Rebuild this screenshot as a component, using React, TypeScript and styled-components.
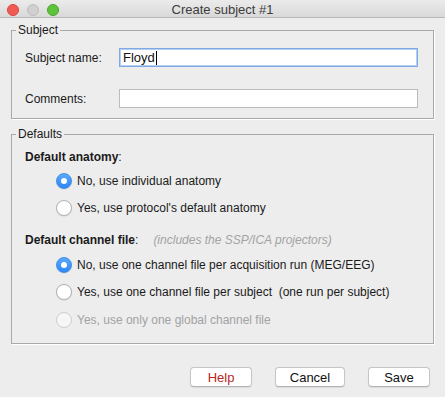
import React from "react";
import styled, { createGlobalStyle } from "styled-components";

const GlobalStyle = createGlobalStyle`
  html, body {
    margin: 0;
    padding: 0;
    background: #ededed;
  }
  body {
    font-family: "Liberation Sans", Arial, Helvetica, sans-serif;
    font-size: 12px;
    color: #1a1a1a;
  }
`;

const Window = styled.div`
  width: 445px;
  height: 397px;
  background: #ededed;
  display: flex;
  flex-direction: column;
  overflow: hidden;
`;

const TitleBar = styled.div`
  height: 17px;
  border-bottom: 1px solid #b9b9b9;
  background: linear-gradient(#ebebeb, #d9d9d9);
  display: grid;
  grid-template-columns: 1fr auto 1fr;
  align-items: center;
`;

const Lights = styled.div`
  display: flex;
  gap: 8px;
  padding-left: 7px;
  padding-top: 1px;
`;

const Light = styled.span<{ fill: string; edge: string }>`
  width: 12px;
  height: 12px;
  box-sizing: border-box;
  border-radius: 50%;
  background: ${(p) => p.fill};
  border: 0.5px solid ${(p) => p.edge};
`;

const Title = styled.div`
  font-size: 13px;
  color: #3c3c3c;
  line-height: 17px;
  padding-top: 1px;
`;

const Group = styled.fieldset<{ top: number }>`
  margin: ${(p) => p.top}px 11px 0 11px;
  padding: 0;
  border: 1px solid #a9a9a9;
  box-shadow: 1px 1px 0 #ffffff;
  min-width: 0;
`;

const Legend = styled.legend`
  margin-left: 4px;
  padding: 0 2px;
  line-height: 14px;
  font-size: 12px;
  color: #1a1a1a;
`;

const SubjectBody = styled.div`
  padding: 11px 15px 10px 13px;
  display: flex;
  flex-direction: column;
  gap: 22px;
`;

const FieldRow = styled.div`
  display: flex;
  align-items: center;
`;

const FieldLabel = styled.div`
  width: 94px;
  flex-shrink: 0;
`;

const TextField = styled.div<{ focused?: boolean }>`
  flex: 1;
  height: 19px;
  box-sizing: border-box;
  background: #ffffff;
  border: 1px solid ${(p) => (p.focused ? "#7fa9e4" : "#bcbcbc")};
  box-shadow: ${(p) => (p.focused ? "inset 0 0 0 1px #b5cff1" : "none")};
  display: flex;
  align-items: center;
  padding-left: 3px;
  font-size: 13px;
  color: #111;
`;

const Caret = styled.span`
  width: 1px;
  height: 14px;
  background: #000;
  margin-left: 1px;
`;

const DefaultsBody = styled.div`
  padding: 9px 15px 9.5px 13px;
  display: flex;
  flex-direction: column;
`;

const Heading = styled.div<{ gap: number }>`
  line-height: 14px;
  margin-top: ${(p) => p.gap}px;
  display: flex;
  align-items: baseline;
`;

const Bold = styled.span`
  font-weight: 700;
`;

const Hint = styled.span`
  font-style: italic;
  color: #a3a3a3;
  font-size: 12px;
  margin-left: 15px;
`;

const RadioGroup = styled.div<{ gap: number }>`
  display: flex;
  flex-direction: column;
  padding-left: 31px;
  margin-top: ${(p) => p.gap}px;
`;

const RadioRow = styled.div<{ disabled?: boolean }>`
  height: 27.5px;
  display: flex;
  align-items: center;
  gap: 5px;
  color: ${(p) => (p.disabled ? "#a2a2a2" : "#1a1a1a")};
`;

const RadioDot = styled.span<{ checked?: boolean; disabled?: boolean }>`
  width: 16px;
  height: 16px;
  box-sizing: border-box;
  border-radius: 50%;
  flex-shrink: 0;
  display: flex;
  align-items: center;
  justify-content: center;
  background: ${(p) =>
    p.checked ? "linear-gradient(#5aa9fb, #2f86f5)" : p.disabled ? "#f6f6f6" : "#ffffff"};
  border: 1px solid
    ${(p) => (p.checked ? "#3d8ee9" : p.disabled ? "#cdcdcd" : "#b2b2b2")};
  box-shadow: ${(p) => (p.disabled ? "none" : "0 0.5px 1px rgba(0,0,0,0.12)")};

  &::after {
    content: "";
    display: ${(p) => (p.checked ? "block" : "none")};
    width: 6px;
    height: 6px;
    border-radius: 50%;
    background: #ffffff;
  }
`;

const ButtonBar = styled.div`
  display: flex;
  justify-content: flex-end;
  gap: 23px;
  padding: 0 15px 0 0;
  margin-top: 23px;
`;

const Button = styled.button<{ w: number; danger?: boolean }>`
  width: ${(p) => p.w}px;
  height: 20px;
  box-sizing: border-box;
  background: #ffffff;
  border: 1px solid #c6c6c6;
  border-bottom-color: #b3b3b3;
  border-radius: 4px;
  box-shadow: 0 0.5px 1px rgba(0, 0, 0, 0.08);
  font-family: "Liberation Sans", Arial, Helvetica, sans-serif;
  font-size: 13px;
  color: ${(p) => (p.danger ? "#b3271f" : "#111")};
  padding: 0;
`;

type Opt = { label: string; checked?: boolean; disabled?: boolean };

const anatomy: Opt[] = [
  { label: "No, use individual anatomy", checked: true },
  { label: "Yes, use protocol's default anatomy" },
];

const channel: Opt[] = [
  { label: "No, use one channel file per acquisition run (MEG/EEG)", checked: true },
  { label: "Yes, use one channel file per subject\u00a0 (one run per subject)" },
  { label: "Yes, use only one global channel file", disabled: true },
];

function Radios({ items, gap }: { items: Opt[]; gap: number }) {
  return (
    <RadioGroup gap={gap}>
      {items.map((o) => (
        <RadioRow key={o.label} disabled={o.disabled}>
          <RadioDot checked={o.checked} disabled={o.disabled} />
          <span>{o.label}</span>
        </RadioRow>
      ))}
    </RadioGroup>
  );
}

export default function App() {
  return (
    <Window>
      <GlobalStyle />
      <TitleBar>
        <Lights>
          <Light fill="#f05b53" edge="#d8463e" />
          <Light fill="#d0d0d0" edge="#bdbdbd" />
          <Light fill="#5cc33a" edge="#48a62b" />
        </Lights>
        <Title>Create subject #1</Title>
        <div />
      </TitleBar>

      <Group top={5}>
        <Legend>Subject</Legend>
        <SubjectBody>
          <FieldRow>
            <FieldLabel>Subject name:</FieldLabel>
            <TextField focused>
              Floyd
              <Caret />
            </TextField>
          </FieldRow>
          <FieldRow>
            <FieldLabel>Comments:</FieldLabel>
            <TextField />
          </FieldRow>
        </SubjectBody>
      </Group>

      <Group top={8}>
        <Legend>Defaults</Legend>
        <DefaultsBody>
          <Heading gap={0}>
            <Bold>Default anatomy</Bold>:
          </Heading>
          <Radios items={anatomy} gap={3} />
          <Heading gap={11}>
            <Bold>Default channel file</Bold>:
            <Hint>(includes the SSP/ICA projectors)</Hint>
          </Heading>
          <Radios items={channel} gap={4} />
        </DefaultsBody>
      </Group>

      <ButtonBar>
        <Button w={62} danger>
          Help
        </Button>
        <Button w={70}>Cancel</Button>
        <Button w={62}>Save</Button>
      </ButtonBar>
    </Window>
  );
}
